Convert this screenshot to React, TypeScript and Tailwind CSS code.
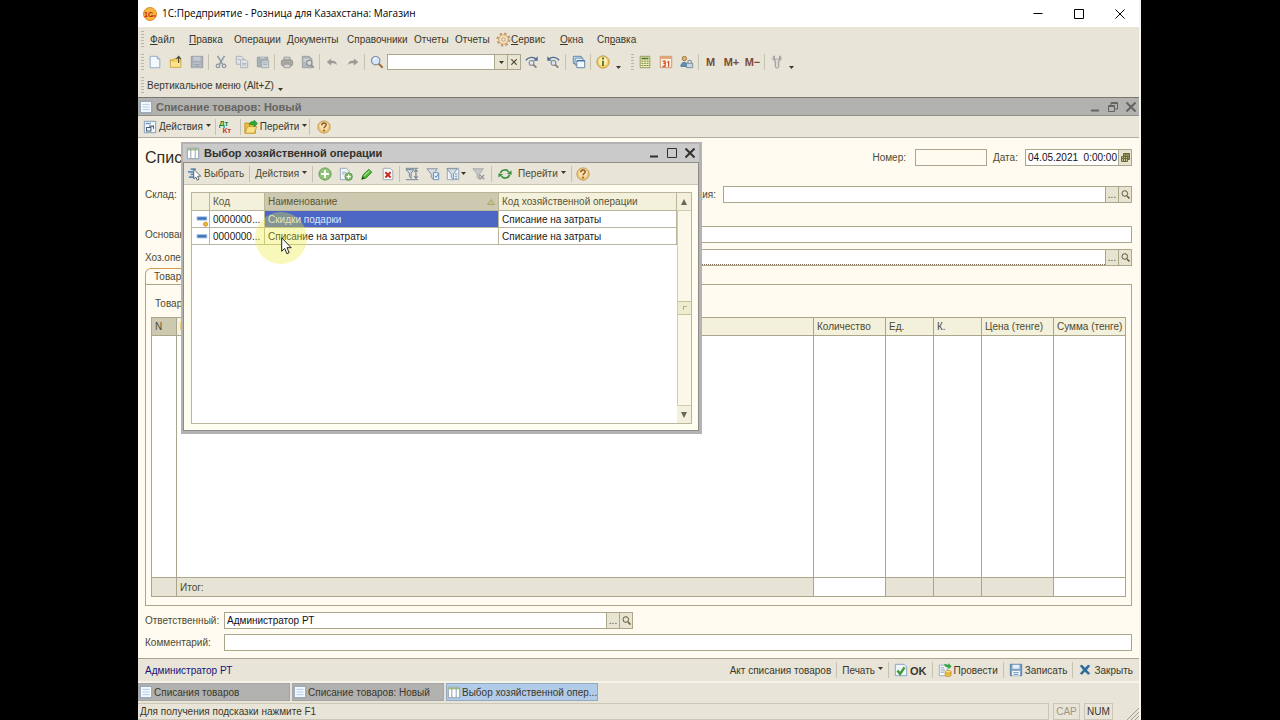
import type { ReactNode } from 'react';
import { clsx } from 'clsx';

type IconName =
  | 'doc' | 'sheet' | 'open' | 'save' | 'cut' | 'copy' | 'paste' | 'print' | 'preview' | 'undo' | 'redo' | 'search'
  | 'findNext' | 'findPrev' | 'windows' | 'info' | 'calc' | 'calendar' | 'user' | 'wrench' | 'gear' | 'form'
  | 'dtkt' | 'goto' | 'help' | 'grid' | 'select' | 'add' | 'addCopy' | 'edit' | 'remove' | 'filterSort'
  | 'filter' | 'filterBy' | 'filterOff' | 'refresh' | 'ok' | 'post' | 'write' | 'close' | 'item' | 'itemPredefined';

const FUNNEL = 'M1 2h12L8.5 8v6L6 12V8z';

const ICONS: Record<IconName, ReactNode> = {
  doc: (
    <>
      <path d="M2.500 1.500h8l3 3v10h-11z" fill="#f4f9ff" stroke="#8aa3c0" />
      <path d="M10.500 1.500v3h3" fill="#cfe0f2" stroke="#8aa3c0" />
    </>
  ),
  sheet: (
    <>
      <path d="M1.500 1.500h13v13h-13z" fill="#f4f9ff" stroke="#8095ad" />
      <path d="M4 5h8M4 8h8M4 11h8" stroke="#a9c3e2" />
    </>
  ),
  open: (
    <>
      <path d="M1.500 5.500h4l1-1.500h7v10h-12z" fill="#f6cf5f" stroke="#c99a2c" />
      <path d="M2 8h11v5.500H2z" fill="#fbe291" />
      <path d="M11 9V2M8.500 4.500L11 1.500l2.500 3" fill="none" stroke="#4a4a3a" strokeWidth="1.300" />
    </>
  ),
  save: (
    <>
      <path d="M1.500 1.500h13v13h-13z" fill="#a9b0b9" stroke="#9298a0" />
      <path d="M4 2h8v4.500H4z" fill="#c6cbd2" />
      <path d="M4 9h8v5.500H4z" fill="#bcc2c9" />
      <path d="M5 11h6M5 13h6" stroke="#9298a0" />
    </>
  ),
  cut: (
    <>
      <path d="M4 1l6 10M12 1L6 11" fill="none" stroke="#8e9aa6" strokeWidth="1.800" />
      <circle cx="4.500" cy="12.500" r="2" fill="none" stroke="#8e9aa6" strokeWidth="1.500" />
      <circle cx="11.500" cy="12.500" r="2" fill="none" stroke="#8e9aa6" strokeWidth="1.500" />
    </>
  ),
  copy: (
    <>
      <path d="M1.500 1.500h6l2 2v7h-8z" fill="#e3e6e8" stroke="#a3abb3" />
      <path d="M6.500 5.500h6l2 2v7h-8z" fill="#e3e6e8" stroke="#a3abb3" />
      <path d="M3 5h3M8 9.500h5M8 11.500h5" stroke="#a3abb3" />
    </>
  ),
  paste: (
    <>
      <path d="M1.500 2.500h12v11h-12z" fill="#a5b0b4" stroke="#939da2" />
      <path d="M5 1h5v3H5z" fill="#c6ccce" />
      <path d="M6.500 6.500h8v8h-8z" fill="#d6dbdc" stroke="#9ba5aa" />
      <path d="M8 9h5M8 11h5" stroke="#9ba5aa" />
    </>
  ),
  print: (
    <>
      <path d="M4.500 2.500h7v4h-7z" fill="#cfcfcb" stroke="#999" />
      <rect x="1.500" y="5.500" width="13" height="7" rx="2.500" fill="#a8a8a6" stroke="#8f8f8d" />
      <path d="M4.500 10.500h7v4h-7z" fill="#d8d8d4" stroke="#999" />
    </>
  ),
  preview: (
    <>
      <path d="M1.500 1.500h8l3 3v10h-11z" fill="#b5b8ba" stroke="#989c9f" />
      <path d="M3 5h6M3 7h4" stroke="#dfe0e0" />
      <circle cx="9.500" cy="9" r="3" fill="#d9dcdc" stroke="#8d9193" strokeWidth="1.300" />
      <path d="M11.500 11.500l3 3" stroke="#8d9193" strokeWidth="2" />
    </>
  ),
  undo: <path d="M2 8l5-4v2.500h2c3 0 4.500 2 4.500 5-1.200-1.500-2.500-2-4.500-2H7V12z" fill="#9a9a94" />,
  redo: <path d="M14 8L9 4v2.500H7c-3 0-4.500 2-4.500 5 1.200-1.500 2.500-2 4.500-2h2V12z" fill="#9a9a94" />,
  search: (
    <>
      <circle cx="6.500" cy="6.500" r="4.800" fill="#d5e7fa" stroke="#8591a3" strokeWidth="1.400" />
      <path d="M4 6a2.500 2.500 0 012.500-2.500" fill="none" stroke="#fff" strokeWidth="1.400" />
      <path d="M10 10l4.500 4.500" stroke="#a3713a" strokeWidth="2.400" />
    </>
  ),
  findNext: (
    <>
      <path d="M1 6c3-4 9-4.500 12-1" fill="none" stroke="#4d6c93" strokeWidth="1.500" />
      <path d="M14.500 1.500v5h-5z" fill="#4d6c93" />
      <circle cx="7.500" cy="9" r="2.700" fill="#dce9f5" stroke="#7c8591" strokeWidth="1.200" />
      <path d="M9.500 11l3.500 3.500" stroke="#8d7d6c" strokeWidth="2" />
    </>
  ),
  findPrev: (
    <>
      <path d="M15 6c-3-4-9-4.500-12-1" fill="none" stroke="#4d6c93" strokeWidth="1.500" />
      <path d="M1.500 1.500v5h5z" fill="#4d6c93" />
      <circle cx="8.500" cy="9" r="2.700" fill="#dce9f5" stroke="#7c8591" strokeWidth="1.200" />
      <path d="M10.500 11l3.500 3.500" stroke="#8d7d6c" strokeWidth="2" />
    </>
  ),
  windows: (
    <>
      <path d="M1.500 1.500h9v8h-9z" fill="#e8f1fa" stroke="#4f7aa5" />
      <path d="M3.500 3.500h9v8h-9z" fill="#e8f1fa" stroke="#4f7aa5" />
      <path d="M5.500 6.500h9v8h-9z" fill="#f4f9ff" stroke="#4f7aa5" />
      <path d="M5.500 6.500h9" stroke="#3f6fa2" strokeWidth="1.500" />
    </>
  ),
  info: (
    <>
      <circle cx="8" cy="8" r="7" fill="#f3cf6a" stroke="#b98c35" />
      <circle cx="8" cy="7" r="5" fill="#fbe9ae" />
      <path d="M8 6.500v6" stroke="#5d7d2c" strokeWidth="2.200" />
      <circle cx="8" cy="4" r="1.300" fill="#5d7d2c" />
    </>
  ),
  calc: (
    <>
      <path d="M2.500 1.500h11v13h-11z" fill="#eef1b4" stroke="#8b8f56" />
      <path d="M4 4h8" stroke="#4f7a34" strokeWidth="2" />
      <path d="M4 7h2m1 0h2m1 0h2M4 9.500h2m1 0h2m1 0h2M4 12h2m1 0h2m1 0h2" stroke="#5c6c38" />
    </>
  ),
  calendar: (
    <>
      <path d="M1.500 1.500h13v13h-13z" fill="#fdf0e4" stroke="#c98c62" />
      <path d="M2 2h12v2.500H2z" fill="#e3a56f" />
      <path d="M4 7h3v2.500H5h2V13H4M9.500 8.500l1.500-1V13.500" fill="none" stroke="#cf4b22" strokeWidth="1.400" />
    </>
  ),
  user: (
    <>
      <circle cx="5" cy="4" r="2.500" fill="#e3b663" stroke="#8f7140" />
      <path d="M1 13c0-6 8-6 8 0z" fill="#5e93b8" stroke="#416f93" />
      <path d="M9 9.500V8a2 2 0 014 0v1.500" fill="none" stroke="#7f8f9c" strokeWidth="1.300" />
      <path d="M7.500 9.500h7v5h-7z" fill="#c8d7e3" stroke="#6f8799" />
    </>
  ),
  wrench: (
    <path
      d="M5 1C3.500 2 3 3.500 3.500 5c.4 1.200 1.500 1.800 2.500 2v6c0 2.500 4 2.500 4 0V7c1-.2 2.100-.8 2.500-2C13 3.500 12.500 2 11 1v4H9L8 4 7 5H5z"
      fill="#d9d9d5" stroke="#8b8b87"
    />
  ),
  gear: (
    <>
      <circle cx="8" cy="8" r="6.300" fill="none" stroke="#c99a66" strokeWidth="2.400" strokeDasharray="2.500 2.450" />
      <circle cx="8" cy="8" r="5" fill="#f5e5c4" stroke="#c99a66" />
      <circle cx="8" cy="8" r="2" fill="#e8e4d8" stroke="#c99a66" />
    </>
  ),
  form: (
    <>
      <path d="M1.500 1.500h13v13h-13z" fill="#eff5fb" stroke="#7893b1" />
      <path d="M3 4h6" stroke="#6f94bd" strokeWidth="1.500" />
      <path d="M4 8.500h5v4H4zM7 7h5v3" fill="none" stroke="#4d6278" strokeWidth="1.200" />
    </>
  ),
  dtkt: (
    <>
      <text x="0" y="7" fontSize="9" fontWeight="700" fill="#178a2d" fontFamily="Liberation Sans">Дт</text>
      <text x="4" y="15" fontSize="9" fontWeight="700" fill="#d0342c" fontFamily="Liberation Sans">Кт</text>
    </>
  ),
  goto: (
    <>
      <path d="M1 3.500h5L7.500 5H13v10H1z" fill="#f0c240" stroke="#b98a1e" />
      <path d="M1.500 15L4 7.500h10.500L12 15z" fill="#fbe188" stroke="#c99a2c" />
      <path d="M6 6c0-4 3-5 5.500-4V0L15.500 4l-4 4V6C9.500 5 8 5 6 6z" fill="#2fa53b" stroke="#1d7a29" strokeWidth=".6" />
    </>
  ),
  help: (
    <>
      <circle cx="8" cy="8" r="7" fill="#f2c777" stroke="#c08f48" />
      <circle cx="8" cy="7" r="5" fill="#f9dfae" />
      <path d="M5.500 6c0-3.500 5-3.500 5-.5 0 1.800-2.500 2-2.500 4" fill="none" stroke="#8a5a22" strokeWidth="1.700" />
      <circle cx="8" cy="12" r="1.100" fill="#8a5a22" />
    </>
  ),
  grid: (
    <>
      <path d="M1.500 2.500h13v12h-13z" fill="#fff" stroke="#8797a5" />
      <path d="M2 3h12v2H2z" fill="#9fc07d" />
      <path d="M5.500 3v11M10.500 3v11" stroke="#8797a5" />
    </>
  ),
  select: (
    <>
      <path d="M3 2.500h6M0 5.500h6M3 8.500h4M1 11.500h6" stroke="#5f8fbf" strokeWidth="2" />
      <path d="M6.500 2.500v11l2.500-2 1.500 3.500 2-1-1.500-3.500h3.500z" fill="#fff" stroke="#4a5663" />
    </>
  ),
  add: (
    <>
      <circle cx="8" cy="8" r="7" fill="#8cc474" stroke="#5c9a4a" />
      <path d="M8 3.500v9M3.500 8h9" stroke="#fff" strokeWidth="2.400" />
    </>
  ),
  addCopy: (
    <>
      <path d="M1.500 1.500h7l3 3v10h-10z" fill="#f1f6fb" stroke="#8fa2b5" />
      <path d="M3.500 6h5M3.500 8h3" stroke="#8fa2b5" />
      <circle cx="11" cy="11" r="4.300" fill="#7cba63" stroke="#4c8c3b" strokeWidth=".8" />
      <path d="M11 8.500v5M8.500 11h5" stroke="#fff" strokeWidth="1.500" />
    </>
  ),
  edit: (
    <>
      <path d="M2 14l1.500-5L10 2.500l3.500 3.500L7 12.500z" fill="#55b43a" stroke="#2d7f1c" />
      <path d="M2 14l1-3.200L5.200 13z" fill="#24461b" />
      <path d="M5 10l5.500-5.500" stroke="#a4e08b" strokeWidth="1.300" />
    </>
  ),
  remove: (
    <>
      <path d="M2.500 1.500h8l3 3v10h-11z" fill="#f8fafc" stroke="#93a1b0" />
      <path d="M5 6l6 6M11 6l-6 6" stroke="#cc2a1e" strokeWidth="2.200" />
    </>
  ),
  filterSort: (
    <>
      <path d="M1 1.500h14M1 14.500h14" stroke="#64798f" />
      <path d="M1 3h9L7 7v6L5 11V7z" fill="#d5dde5" stroke="#64798f" />
      <path d="M12.500 3v10M10.500 5.500l2-2.500 2 2.500M10.500 10.500l2 2.500 2-2.500" fill="none" stroke="#4d6278" />
    </>
  ),
  filter: (
    <>
      <path d={FUNNEL} fill="#d5dde5" stroke="#7b8997" />
      <path d="M8.500 6.500h6v8h-6z" fill="#eef5fc" stroke="#5e87b0" />
      <path d="M10 10l1.500 2L14 8" fill="none" stroke="#3d72a8" />
    </>
  ),
  filterBy: (
    <>
      <path d="M1.500 1.500h13v13h-13z" fill="#eff5fb" stroke="#8fa2b5" />
      <path d={FUNNEL} fill="#d5dde5" stroke="#7b8997" />
      <path d="M10 8h3M10 10.500h3M10 13h3" stroke="#5e87b0" />
    </>
  ),
  filterOff: (
    <>
      <path d={FUNNEL} fill="#c5c7c8" stroke="#a0a4a7" />
      <path d="M9 9l5 5M14 9l-5 5" stroke="#94989b" strokeWidth="1.600" />
    </>
  ),
  refresh: (
    <>
      <path d="M3 7c.6-4 7-5 9-1.500M13 9c-.6 4-7 5-9 1.500" fill="none" stroke="#3f9142" strokeWidth="2" />
      <path d="M15.500 4v5L10 7.500zM.5 12V7L6 8.500z" fill="#3f9142" />
    </>
  ),
  ok: (
    <>
      <path d="M1.500 1.500h10l3 3v10h-13z" fill="#eef6fc" stroke="#7e9dbb" />
      <path d="M4 8.500l3 4 5-7.500" fill="none" stroke="#3f9a34" strokeWidth="2.800" />
    </>
  ),
  post: (
    <>
      <path d="M1.500 2.500h9v12h-9z" fill="#f7fafc" stroke="#93a9bd" />
      <path d="M3 5.500h4M3 8h5M3 10.500h4" stroke="#7795b1" />
      <path d="M7 1l5 1V0l3.500 4L12 7V5L8 4z" fill="#2fa53b" />
      <path d="M8 10v4c0 2 7 2 7 0v-4z" fill="#edbd3c" stroke="#b98a1e" strokeWidth=".7" />
      <ellipse cx="11.500" cy="10" rx="3.500" ry="1.500" fill="#fbe188" stroke="#b98a1e" strokeWidth=".7" />
    </>
  ),
  write: (
    <>
      <path d="M1.500 1.500h13v13h-13z" fill="#7fa3c7" stroke="#54799f" />
      <path d="M4 2h8v4.500H4z" fill="#e7f0f8" />
      <path d="M3.500 9h9v5.500h-9z" fill="#f4f8fc" />
      <path d="M5 11h6M5 13h6" stroke="#6b8fb3" />
    </>
  ),
  close: <path d="M2 3l2.500-1L8 5.500 11.500 2 14 3l-3.800 5 3.800 4-2.500 1.500L8 10l-3.500 3.500L2 12l3.800-4z" fill="#2f6d9e" />,
  item: <path d="M2.500 4.500h12v4h-12z" fill="#3f72b8" stroke="#9bbce0" />,
  itemPredefined: (
    <>
      <path d="M2.500 3.500h12v4h-12z" fill="#3f72b8" stroke="#9bbce0" />
      <circle cx="13" cy="12.500" r="2.500" fill="#f0b83a" stroke="#c08a1e" />
    </>
  ),
};

function Icon({ name, className = 'size-[14px]' }: { name: IconName; className?: string }) {
  return (
    <svg viewBox="0 0 16 16" className={clsx('shrink-0', className)} aria-hidden="true">
      {ICONS[name]}
    </svg>
  );
}

function Tool({ name, label }: { name: IconName; label: string }) {
  return (
    <button type="button" aria-label={label} className="flex w-[21px] shrink-0 items-center justify-center">
      <Icon name={name} />
    </button>
  );
}

function Sep({ className = 'mx-px' }: { className?: string }) {
  return <span className={clsx('h-4 w-px shrink-0 self-center bg-[#c6c2b0]', className)} />;
}

function Grip() {
  return <span className="h-4 w-[3px] shrink-0 self-center bg-[repeating-linear-gradient(#b9b6a8_0_1px,transparent_1px_3px)]" />;
}

function Arrow({ className }: { className?: string }) {
  return (
    <svg viewBox="0 0 5 3" className={clsx('h-[3px] w-[5px] shrink-0', className)} aria-hidden="true">
      <path d="M0 0h5L2.500 3z" fill="#3b372b" />
    </svg>
  );
}

interface TextButtonProps { icon?: IconName; arrow?: boolean; className?: string; children: ReactNode; }

function TextButton({ icon, arrow, className, children }: TextButtonProps) {
  return (
    <button type="button" className={clsx('flex shrink-0 items-center gap-[2px] whitespace-nowrap', className)}>
      {icon && <Icon name={icon} />}
      <span className="pt-px">{children}</span>
      {arrow && <Arrow className="mb-[3px] ml-px" />}
    </button>
  );
}

type GlyphKind = 'line' | 'min' | 'max' | 'restore' | 'close';

function Glyph({ kind, className = 'size-[10px]' }: { kind: GlyphKind; className?: string }) {
  return (
    <svg viewBox="0 0 10 10" className={className} fill="none" stroke="currentColor" aria-hidden="true">
      {kind === 'line' && <path d="M.5 4.500h9" />}
      {kind === 'min' && <path d="M1 8.500h8" />}
      {kind === 'max' && <path d="M.5.5h9v9h-9z" />}
      {kind === 'restore' && <path d="M.5 3.500h6v6h-6zM3 3V.5h6.500V7H7M3 1.500h6.500M.5 4.500h6" />}
      {kind === 'close' && <path d="M.5.5l9 9M9.500.5l-9 9" />}
    </svg>
  );
}

function SmallButton({ label, children }: { label: string; children: ReactNode }) {
  return (
    <button type="button" aria-label={label} className="flex w-[13px] shrink-0 items-center justify-center border-l border-[#a9a68c] bg-[#e7e4d2] text-[#4d4a32]">
      {children}
    </button>
  );
}

function Magnifier() {
  return (
    <svg viewBox="0 0 9 9" className="size-[9px]" fill="none" stroke="#5c5936" aria-hidden="true">
      <circle cx="3.800" cy="3.500" r="2.800" />
      <path d="M6 6l2.500 2.500" strokeWidth="1.500" />
    </svg>
  );
}

interface FieldProps { id: string; value?: string; picker?: boolean; required?: boolean; readOnly?: boolean; className?: string; children?: ReactNode; }

function Field({ id, value = '', picker, required, readOnly, className, children }: FieldProps) {
  return (
    <div className={clsx('flex h-[17px] border border-[#a9a68c]', readOnly ? 'bg-[#fffbf0]' : 'bg-white', className)}>
      <input
        id={id}
        defaultValue={value}
        readOnly={readOnly}
        className={clsx('min-w-0 flex-1 bg-transparent pl-[2px] text-[#0f0f1c] outline-none', required && 'border-b border-dotted border-[#8a6a52]')}
      />
      {picker && (
        <>
          <SmallButton label="Выбрать"><span>...</span></SmallButton>
          <SmallButton label="Открыть"><Magnifier /></SmallButton>
        </>
      )}
      {children}
    </div>
  );
}

const MENU: { text: string; key?: number; icon?: IconName; className: string }[] = [
  { text: 'Файл', key: 0, className: 'w-[39px]' },
  { text: 'Правка', key: 0, className: 'w-[45px]' },
  { text: 'Операции', className: 'w-[53px]' },
  { text: 'Документы', className: 'w-[60px]' },
  { text: 'Справочники', className: 'w-[67px]' },
  { text: 'Отчеты', className: 'w-[41px]' },
  { text: 'Отчеты', className: 'w-[41px]' },
  { text: 'Сервис', key: 0, icon: 'gear', className: 'w-[64px]' },
  { text: 'Окна', key: 0, className: 'w-[37px]' },
  { text: 'Справка', key: 2, className: 'w-[50px]' },
];

function MenuBar() {
  return (
    <nav className="flex h-6 items-center pl-[3px]">
      <Grip />
      <div className="flex pl-[6px]">
        {MENU.map(({ text, key, icon, className }, i) => (
          <button key={i} type="button" className={clsx('flex shrink-0 items-center whitespace-nowrap', className)}>
            {icon && <Icon name={icon} className="size-[15px]" />}
            <span className="pt-px">
              {key === undefined ? text : <>{text.slice(0, key)}<u>{text[key]}</u>{text.slice(key + 1)}</>}
            </span>
          </button>
        ))}
      </div>
    </nav>
  );
}

function MainToolbar() {
  return (
    <div className="flex h-[22px] items-stretch pl-[3px]">
      <Grip />
      <Tool name="doc" label="Новый" />
      <Tool name="open" label="Открыть" />
      <Tool name="save" label="Сохранить" />
      <Sep />
      <Tool name="cut" label="Вырезать" />
      <Tool name="copy" label="Копировать" />
      <Tool name="paste" label="Вставить" />
      <Sep />
      <Tool name="print" label="Печать" />
      <Tool name="preview" label="Просмотр" />
      <Sep />
      <Tool name="undo" label="Отменить" />
      <Tool name="redo" label="Вернуть" />
      <Sep />
      <Tool name="search" label="Найти" />
      <div className="my-[3px] flex w-[134px] shrink-0 border border-[#a9a68c] bg-white">
        <input aria-label="Строка поиска" className="min-w-0 flex-1 px-1 outline-none" />
        <SmallButton label="Список"><Arrow /></SmallButton>
        <SmallButton label="Очистить"><Glyph kind="close" className="size-[6px] stroke-2" /></SmallButton>
      </div>
      <Tool name="findNext" label="Найти далее" />
      <Tool name="findPrev" label="Найти ранее" />
      <Sep className="mx-[2px]" />
      <Tool name="windows" label="Окна" />
      <Sep />
      <Tool name="info" label="Справка" />
      <Arrow className="mt-[15px] mr-[10px] ml-[3px]" />
      <Grip />
      <Tool name="calc" label="Калькулятор" />
      <Tool name="calendar" label="Календарь" />
      <Tool name="user" label="Пользователи" />
      <Sep />
      {['M', 'M+', 'M−'].map((m) => (
        <button key={m} type="button" className="w-[21px] shrink-0 text-[11px] font-bold text-[#7d4a38]">{m}</button>
      ))}
      <Sep />
      <Tool name="wrench" label="Настройка" />
      <Arrow className="mt-[15px] ml-[2px]" />
    </div>
  );
}

const OPERATIONS = [
  { code: '0000000...', name: 'Скидки подарки', kind: 'Списание на затраты', icon: 'itemPredefined' as IconName, selected: true },
  { code: '0000000...', name: 'Списание на затраты', kind: 'Списание на затраты', icon: 'item' as IconName, selected: false },
];

function OperationDialog() {
  return (
    <section className="absolute top-[4px] left-[43px] flex h-[292px] w-[521px] flex-col border-2 border-r-[3px] border-b-[3px] border-[#b4b2b2] bg-[#fffdf0]">
      <header className="flex h-[18px] shrink-0 items-center gap-1 bg-[#cacaca] pr-[4px] pl-[3px] text-[11px] font-bold text-[#33312b]">
        <Icon name="grid" />
        <h2 className="flex-1">Выбор хозяйственной операции</h2>
        <div className="flex gap-2">
          <button type="button" aria-label="Свернуть"><Glyph kind="min" className="size-[10px] stroke-2" /></button>
          <button type="button" aria-label="Развернуть"><Glyph kind="max" /></button>
          <button type="button" aria-label="Закрыть"><Glyph kind="close" className="size-[10px] stroke-2" /></button>
        </div>
      </header>
      <div className="flex flex-1 flex-col border border-[#8f8c8c]">
        <div className="flex h-[22px] items-stretch border-b border-[#c9c6b2] bg-[#e8e4d8] pl-1">
          <TextButton icon="select">Выбрать</TextButton>
          <Sep className="mx-[5px]" />
          <TextButton arrow>Действия</TextButton>
          <Sep className="mr-px ml-[5px]" />
          <Tool name="add" label="Добавить" />
          <Tool name="addCopy" label="Добавить копированием" />
          <Tool name="edit" label="Изменить" />
          <Tool name="remove" label="Пометить на удаление" />
          <Sep />
          <Tool name="filterSort" label="Отбор и сортировка" />
          <Tool name="filter" label="Отбор по значению" />
          <button type="button" aria-label="История отборов" className="flex w-[25px] items-center justify-center gap-px">
            <Icon name="filterBy" />
            <Arrow />
          </button>
          <Tool name="filterOff" label="Отключить отбор" />
          <Sep className="mx-[2px]" />
          <Tool name="refresh" label="Обновить" />
          <TextButton arrow className="pl-[3px]">Перейти</TextButton>
          <Sep className="mr-px ml-[5px]" />
          <Tool name="help" label="Справка" />
        </div>
        <div className="mt-[7px] mr-[6px] mb-[6px] ml-[7px] flex flex-1 border border-[#b9b69c] bg-white">
          <div className="min-w-0 flex-1">
            <table className="w-full table-fixed border-separate border-spacing-0 text-left">
              <colgroup>
                <col className="w-[18px]" />
                <col className="w-[55px]" />
                <col className="w-[234px]" />
                <col />
              </colgroup>
              <thead>
                <tr className="h-[18px] bg-[#f3f0dc] text-[#5a5738] [&>th]:border-r [&>th]:border-b [&>th]:border-[#b9b69c] [&>th]:px-[3px] [&>th]:font-normal">
                  <th />
                  <th>Код</th>
                  <th className="bg-[#cdc9b0]">
                    <div className="flex items-center justify-between">
                      Наименование
                      <svg viewBox="0 0 8 6" className="h-[6px] w-2" aria-hidden="true"><path d="M4 .5L7.500 5.500h-7z" fill="#c9c48f" stroke="#a8a370" /></svg>
                    </div>
                  </th>
                  <th>Код хозяйственной операции</th>
                </tr>
              </thead>
              <tbody>
                {OPERATIONS.map((o) => (
                  <tr key={o.name} className="h-[17px] text-[#1b1a16] [&>td]:border-r [&>td]:border-b [&>td]:border-[#b9b69c] [&>td]:px-[3px] [&>td]:pt-[2px] [&>td]:whitespace-nowrap">
                    <td><Icon name={o.icon} className="size-[13px]" /></td>
                    <td>{o.code}</td>
                    <td className={clsx(o.selected && 'bg-[#4c66c4] text-[#dfe5f7]')}>{o.name}</td>
                    <td>{o.kind}</td>
                  </tr>
                ))}
              </tbody>
            </table>
          </div>
          <div className="flex w-[14px] flex-col items-stretch bg-[#fbf8ea]">
            <button type="button" aria-label="Вверх" className="flex h-[18px] items-center justify-center border-b border-[#cfccb0] bg-[#f3f0dc]">
              <svg viewBox="0 0 6 6" className="size-[6px]" aria-hidden="true"><path d="M3 0l3 6H0z" fill="#6a675a" /></svg>
            </button>
            <div className="flex flex-1 items-center border-l border-[#cfccb0]">
              <div className="flex h-[14px] flex-1 items-center justify-center border-y border-[#c5c29f] bg-[#efedcf]">
                <span className="size-1 border-t border-l border-[#b5b27a]" />
              </div>
            </div>
            <button type="button" aria-label="Вниз" className="flex h-[18px] items-center justify-center border-t border-[#cfccb0] bg-[#f3f0dc]">
              <svg viewBox="0 0 6 6" className="size-[6px]" aria-hidden="true"><path d="M3 6L0 0h6z" fill="#6a675a" /></svg>
            </button>
          </div>
        </div>
      </div>
      <span className="absolute top-[68px] left-[72px] size-[52px] rounded-full bg-[#eeea3c]/35" />
      <svg viewBox="0 0 12 18" className="absolute top-[93px] left-[98px] h-[18px] w-3" aria-hidden="true">
        <path d="M.7.8v13.500l3-2.800 2.200 5.200 2.300-1-2.200-5h4.200z" fill="#fff" stroke="#222" />
      </svg>
    </section>
  );
}

const COLUMNS = [
  { title: 'N', className: 'w-[25px]' },
  { title: 'Номенклатура', className: '' },
  { title: 'Количество', className: 'w-[72px]' },
  { title: 'Ед.', className: 'w-[48px]' },
  { title: 'К.', className: 'w-[48px]' },
  { title: 'Цена (тенге)', className: 'w-[72px]' },
  { title: 'Сумма (тенге)', className: 'w-[72px]' },
];

function GoodsTable() {
  return (
    <table className="h-full w-full table-fixed border-collapse text-left text-[#4d4a32] [&_td]:border [&_td]:border-[#a9a68c] [&_td]:px-[3px] [&_th]:border [&_th]:border-[#a9a68c] [&_th]:px-[3px] [&_th]:font-normal [&_th]:whitespace-nowrap">
      <thead>
        <tr className="h-[18px] bg-[#f3f0dc]">
          {COLUMNS.map(({ title, className }, i) => (
            <th key={title} className={clsx(className, i === 0 && 'bg-[#cdc9b0]')}>{title}</th>
          ))}
        </tr>
      </thead>
      <tbody>
        <tr className="bg-white">
          {COLUMNS.map(({ title }) => <td key={title} />)}
        </tr>
      </tbody>
      <tfoot>
        <tr className="h-[19px] bg-[#e7e4d6]">
          <td />
          <td className="pt-px">Итог:</td>
          <td className="bg-white" />
          <td />
          <td />
          <td />
          <td className="bg-white" />
        </tr>
      </tfoot>
    </table>
  );
}

function DocumentForm() {
  return (
    <main className="relative flex flex-1 flex-col bg-[#fffbf0] px-[7px] pb-[7px] text-[#4d4a32]">
      <div className="mt-[11px] flex h-[17px] items-center">
        <h1 className="flex-1 text-[16px] text-[#2d2b20]">Списание товаров</h1>
        <label htmlFor="number" className="mr-[9px]">Номер:</label>
        <Field id="number" readOnly className="w-[72px]" />
        <label htmlFor="date" className="w-[38px] pl-[6px]">Дата:</label>
        <Field id="date" value="04.05.2021  0:00:00" className="w-[107px] whitespace-pre">
          <SmallButton label="Календарь">
            <svg viewBox="0 0 9 9" className="size-[9px]" aria-hidden="true">
              <path d="M2.500.5h6v6h-6z" fill="#8a8756" stroke="#6b6838" />
              <path d="M.5 3.500h6v5h-6zM1 5.500h5M2.500 4v4M4.500 4v4" fill="#c9c594" stroke="#6b6838" />
            </svg>
          </SmallButton>
        </Field>
      </div>
      <div className="mt-5 flex h-[17px] items-center">
        <label htmlFor="store" className="w-[80px]">Склад:</label>
        <Field id="store" picker className="w-[380px]" />
        <label htmlFor="org" className="w-[118px] pr-[7px] text-right">Организация:</label>
        <Field id="org" picker className="flex-1" />
      </div>
      <div className="mt-[23px] flex h-[17px] items-center">
        <label htmlFor="basis" className="w-[80px]">Основание:</label>
        <Field id="basis" className="flex-1" />
      </div>
      <div className="mt-[6px] flex h-[17px] items-center">
        <label htmlFor="operation" className="w-[80px]">Хоз.операция:</label>
        <Field id="operation" picker required className="flex-1" />
      </div>
      <div className="mt-[2px] flex h-4">
        <button type="button" className="w-[70px] rounded-t-md border border-b-0 border-t-[#d99a4a] border-[#a9a68c] pl-2 text-left">Товары</button>
      </div>
      <div className="flex flex-1 flex-col border border-[#a9a68c] px-[5px] pt-[11px] pb-2">
        <div className="mb-[5px] h-4 pl-[4px] leading-4">Товары (0 поз.)</div>
        <div className="flex-1"><GoodsTable /></div>
      </div>
      <div className="mt-[6px] flex h-[17px] items-center">
        <label htmlFor="owner" className="w-[79px]">Ответственный:</label>
        <Field id="owner" value="Администратор РТ" picker className="w-[409px]" />
      </div>
      <div className="mt-[5px] flex h-[17px] items-center">
        <label htmlFor="comment" className="w-[79px]">Комментарий:</label>
        <Field id="comment" className="flex-1" />
      </div>
      <OperationDialog />
    </main>
  );
}

const WINDOWS: { title: string; icon: IconName; active?: boolean }[] = [
  { title: 'Списания товаров', icon: 'sheet' },
  { title: 'Списание товаров: Новый', icon: 'sheet' },
  { title: 'Выбор хозяйственной опер...', icon: 'grid', active: true },
];

export default function App() {
  return (
    <div className="flex min-h-screen bg-black pr-[139px] pl-[138px] font-['Liberation_Sans',Arial,sans-serif] text-[10px] leading-[14px]">
      <div className="flex flex-1 flex-col border-r-2 border-[#f6f5f0] bg-[#e8e4d8] text-[#3b372b]">
        <header className="flex h-[27px] items-center bg-white pr-[14px] pl-[5px] text-black">
          <svg viewBox="0 0 14 14" className="mr-[5px] size-[14px]" aria-hidden="true">
            <circle cx="7" cy="7" r="6.500" fill="#f6b53d" stroke="#e08a2a" />
            <text x="1" y="9.500" fontSize="7" fontWeight="700" fill="#c8201c" fontFamily="Liberation Sans">1С</text>
            <path d="M8 9h5" stroke="#c8201c" />
          </svg>
          <div className="flex-1 pb-px font-['Open_Sans',sans-serif]">1С:Предприятие - Розница для Казахстана: Магазин</div>
          <div className="flex gap-[31px]">
            <button type="button" aria-label="Свернуть"><Glyph kind="line" /></button>
            <button type="button" aria-label="Развернуть"><Glyph kind="max" /></button>
            <button type="button" aria-label="Закрыть"><Glyph kind="close" /></button>
          </div>
        </header>
        <MenuBar />
        <MainToolbar />
        <div className="flex h-6 items-center pl-[3px]">
          <Grip />
          <button type="button" className="ml-[3px] flex items-center">
            <span className="pt-[2px]">Вертикальное меню (Alt+Z)</span>
            <Arrow className="mt-2 ml-[4px]" />
          </button>
        </div>
        <div className="flex h-[19px] items-center border-t border-b border-t-[#77756e] border-b-[#918f88] bg-[#b1b1af] pr-[3px] pl-px text-[11px] text-[#66645f]">
          <Icon name="sheet" />
          <h2 className="ml-[3px] flex-1 font-bold">Списание товаров: Новый</h2>
          <div className="flex gap-2">
            <button type="button" aria-label="Свернуть"><Glyph kind="min" className="size-[10px] stroke-2" /></button>
            <button type="button" aria-label="Восстановить"><Glyph kind="restore" /></button>
            <button type="button" aria-label="Закрыть"><Glyph kind="close" className="size-[10px] stroke-2" /></button>
          </div>
        </div>
        <div className="flex h-[22px] items-stretch border-b border-[#b1ae9f] bg-[#e9e6d9] pl-[5px]">
          <TextButton icon="form" arrow>Действия</TextButton>
          <Sep className="ml-[4px]" />
          <Tool name="dtkt" label="Проводки" />
          <Sep className="mx-[3px]" />
          <TextButton icon="goto" arrow>Перейти</TextButton>
          <Sep className="mr-[3px] ml-[2px]" />
          <Tool name="help" label="Справка" />
        </div>
        <DocumentForm />
        <div className="flex h-[25px] items-center gap-[4px] border-t border-b-2 border-t-[#a9a68c] border-b-[#f6f3e8] pr-[6px] pl-[7px]">
          <span className="flex-1 pt-px text-[#14147a]">Администратор РТ</span>
          <TextButton>Акт списания товаров</TextButton>
          <Sep />
          <TextButton arrow>Печать</TextButton>
          <Sep />
          <TextButton icon="ok" className="text-[11px] font-bold">OK</TextButton>
          <Sep />
          <TextButton icon="post">Провести</TextButton>
          <Sep />
          <TextButton icon="write">Записать</TextButton>
          <Sep />
          <TextButton icon="close">Закрыть</TextButton>
        </div>
        <div className="flex h-[18px] gap-[2px]">
          {WINDOWS.map(({ title, icon, active }) => (
            <button
              key={title}
              type="button"
              className={clsx(
                'flex w-[152px] items-center gap-px border whitespace-nowrap',
                active ? 'border-[#93a9c0] bg-[#b1cbe8]' : 'border-[#a5a5a3] bg-[#b1b1af]'
              )}
            >
              <Icon name={icon} />
              <span className="pt-px">{title}</span>
            </button>
          ))}
        </div>
        <footer className="mt-[2px] flex h-[17px] items-stretch gap-1 leading-[15px]">
          <span className="flex-1 border border-l-0 border-[#cbc7b6] pl-[2px]">Для получения подсказки нажмите F1</span>
          <span className="w-[27px] border border-[#cbc7b6] text-center text-[#9a9786]">CAP</span>
          <span className="w-[29px] border border-[#cbc7b6] text-center">NUM</span>
          <svg viewBox="0 0 14 14" className="ml-2 size-[14px] self-end" stroke="#a19e8c" aria-hidden="true">
            <path d="M2 14L14 2M6 14l8-8M10 14l4-4" />
          </svg>
        </footer>
      </div>
    </div>
  );
}
